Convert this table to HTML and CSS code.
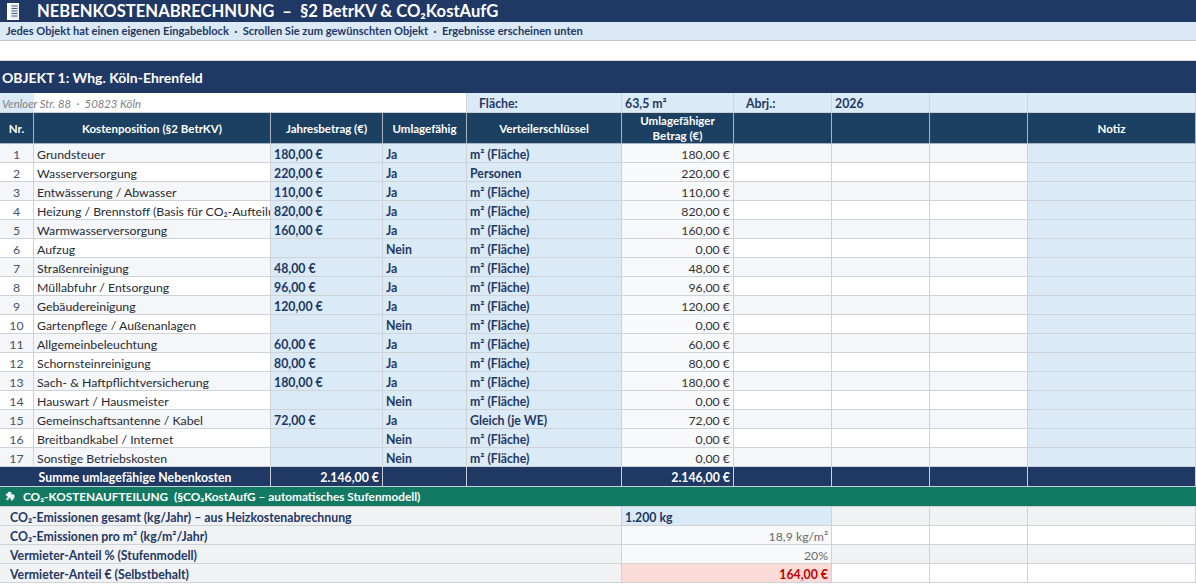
FILE: index.html
```html
<!DOCTYPE html>
<html lang="de">
<head>
<meta charset="utf-8">
<title>Nebenkostenabrechnung</title>
<link rel="stylesheet" href="styles.css">
</head>
<body>
<div class="sheet">
  <header class="title">
    <svg class="doc-icon" width="14" height="17" viewBox="0 0 14 17">
      <rect x="1.5" y="0.5" width="11" height="16" fill="#e6edf6" stroke="#ffffff"/>
      <rect x="1.5" y="0.5" width="3" height="16" fill="#ffffff"/>
      <path d="M5.5 3h6M5.5 5.5h6M5.5 8h6M5.5 10.5h6M5.5 13h6" stroke="#4d6282" stroke-width="1"/>
    </svg>
    <span class="title-text">NEBENKOSTENABRECHNUNG  –  §2 BetrKV &amp; CO₂KostAufG</span>
  </header>
  <div class="sub">Jedes Objekt hat einen eigenen Eingabeblock  ·  Scrollen Sie zum gewünschten Objekt  ·  Ergebnisse erscheinen unten</div>
  <div class="spacer"></div>

  <div class="obj">OBJEKT 1: Whg. Köln-Ehrenfeld</div>

  <div class="row addr">
    <div class="c addr-text">Venloer Str. 88  ·  50823 Köln</div>
    <div class="c in lbl">Fläche:</div>
    <div class="c in">63,5 m²</div>
    <div class="c in lbl">Abrj.:</div>
    <div class="c in">2026</div>
    <div class="c in"></div>
    <div class="c in"></div>
  </div>

  <div class="row hdr">
    <div class="c">Nr.</div>
    <div class="c">Kostenposition (§2 BetrKV)</div>
    <div class="c">Jahresbetrag (€)</div>
    <div class="c">Umlagefähig</div>
    <div class="c">Verteilerschlüssel</div>
    <div class="c">Umlagefähiger<br>Betrag (€)</div>
    <div class="c"></div>
    <div class="c"></div>
    <div class="c"></div>
    <div class="c">Notiz</div>
  </div>

  <div class="row data odd">
    <div class="c nr alt">1</div><div class="c alt">Grundsteuer</div><div class="c in">180,00 €</div><div class="c in">Ja</div><div class="c in">m² (Fläche)</div><div class="c calc">180,00 €</div><div class="c alt"></div><div class="c alt"></div><div class="c alt"></div><div class="c note"></div>
  </div>
  <div class="row data">
    <div class="c nr alt">2</div><div class="c alt">Wasserversorgung</div><div class="c in">220,00 €</div><div class="c in">Ja</div><div class="c in">Personen</div><div class="c calc">220,00 €</div><div class="c alt"></div><div class="c alt"></div><div class="c alt"></div><div class="c note"></div>
  </div>
  <div class="row data odd">
    <div class="c nr alt">3</div><div class="c alt">Entwässerung / Abwasser</div><div class="c in">110,00 €</div><div class="c in">Ja</div><div class="c in">m² (Fläche)</div><div class="c calc">110,00 €</div><div class="c alt"></div><div class="c alt"></div><div class="c alt"></div><div class="c note"></div>
  </div>
  <div class="row data">
    <div class="c nr alt">4</div><div class="c alt">Heizung / Brennstoff (Basis für CO₂-Aufteilung)</div><div class="c in">820,00 €</div><div class="c in">Ja</div><div class="c in">m² (Fläche)</div><div class="c calc">820,00 €</div><div class="c alt"></div><div class="c alt"></div><div class="c alt"></div><div class="c note"></div>
  </div>
  <div class="row data odd">
    <div class="c nr alt">5</div><div class="c alt">Warmwasserversorgung</div><div class="c in">160,00 €</div><div class="c in">Ja</div><div class="c in">m² (Fläche)</div><div class="c calc">160,00 €</div><div class="c alt"></div><div class="c alt"></div><div class="c alt"></div><div class="c note"></div>
  </div>
  <div class="row data">
    <div class="c nr alt">6</div><div class="c alt">Aufzug</div><div class="c in"></div><div class="c in">Nein</div><div class="c in">m² (Fläche)</div><div class="c calc">0,00 €</div><div class="c alt"></div><div class="c alt"></div><div class="c alt"></div><div class="c note"></div>
  </div>
  <div class="row data odd">
    <div class="c nr alt">7</div><div class="c alt">Straßenreinigung</div><div class="c in">48,00 €</div><div class="c in">Ja</div><div class="c in">m² (Fläche)</div><div class="c calc">48,00 €</div><div class="c alt"></div><div class="c alt"></div><div class="c alt"></div><div class="c note"></div>
  </div>
  <div class="row data">
    <div class="c nr alt">8</div><div class="c alt">Müllabfuhr / Entsorgung</div><div class="c in">96,00 €</div><div class="c in">Ja</div><div class="c in">m² (Fläche)</div><div class="c calc">96,00 €</div><div class="c alt"></div><div class="c alt"></div><div class="c alt"></div><div class="c note"></div>
  </div>
  <div class="row data odd">
    <div class="c nr alt">9</div><div class="c alt">Gebäudereinigung</div><div class="c in">120,00 €</div><div class="c in">Ja</div><div class="c in">m² (Fläche)</div><div class="c calc">120,00 €</div><div class="c alt"></div><div class="c alt"></div><div class="c alt"></div><div class="c note"></div>
  </div>
  <div class="row data">
    <div class="c nr alt">10</div><div class="c alt">Gartenpflege / Außenanlagen</div><div class="c in"></div><div class="c in">Nein</div><div class="c in">m² (Fläche)</div><div class="c calc">0,00 €</div><div class="c alt"></div><div class="c alt"></div><div class="c alt"></div><div class="c note"></div>
  </div>
  <div class="row data odd">
    <div class="c nr alt">11</div><div class="c alt">Allgemeinbeleuchtung</div><div class="c in">60,00 €</div><div class="c in">Ja</div><div class="c in">m² (Fläche)</div><div class="c calc">60,00 €</div><div class="c alt"></div><div class="c alt"></div><div class="c alt"></div><div class="c note"></div>
  </div>
  <div class="row data">
    <div class="c nr alt">12</div><div class="c alt">Schornsteinreinigung</div><div class="c in">80,00 €</div><div class="c in">Ja</div><div class="c in">m² (Fläche)</div><div class="c calc">80,00 €</div><div class="c alt"></div><div class="c alt"></div><div class="c alt"></div><div class="c note"></div>
  </div>
  <div class="row data odd">
    <div class="c nr alt">13</div><div class="c alt">Sach- &amp; Haftpflichtversicherung</div><div class="c in">180,00 €</div><div class="c in">Ja</div><div class="c in">m² (Fläche)</div><div class="c calc">180,00 €</div><div class="c alt"></div><div class="c alt"></div><div class="c alt"></div><div class="c note"></div>
  </div>
  <div class="row data">
    <div class="c nr alt">14</div><div class="c alt">Hauswart / Hausmeister</div><div class="c in"></div><div class="c in">Nein</div><div class="c in">m² (Fläche)</div><div class="c calc">0,00 €</div><div class="c alt"></div><div class="c alt"></div><div class="c alt"></div><div class="c note"></div>
  </div>
  <div class="row data odd">
    <div class="c nr alt">15</div><div class="c alt">Gemeinschaftsantenne / Kabel</div><div class="c in">72,00 €</div><div class="c in">Ja</div><div class="c in">Gleich (je WE)</div><div class="c calc">72,00 €</div><div class="c alt"></div><div class="c alt"></div><div class="c alt"></div><div class="c note"></div>
  </div>
  <div class="row data">
    <div class="c nr alt">16</div><div class="c alt">Breitbandkabel / Internet</div><div class="c in"></div><div class="c in">Nein</div><div class="c in">m² (Fläche)</div><div class="c calc">0,00 €</div><div class="c alt"></div><div class="c alt"></div><div class="c alt"></div><div class="c note"></div>
  </div>
  <div class="row data odd">
    <div class="c nr alt">17</div><div class="c alt">Sonstige Betriebskosten</div><div class="c in"></div><div class="c in">Nein</div><div class="c in">m² (Fläche)</div><div class="c calc">0,00 €</div><div class="c alt"></div><div class="c alt"></div><div class="c alt"></div><div class="c note"></div>
  </div>

  <div class="row sum">
    <div class="c sum-label">Summe umlagefähige Nebenkosten</div>
    <div class="c num">2.146,00 €</div>
    <div class="c"></div>
    <div class="c"></div>
    <div class="c num">2.146,00 €</div>
    <div class="c"></div>
    <div class="c"></div>
    <div class="c"></div>
    <div class="c"></div>
  </div>

  <div class="co2-head">
    <svg class="globe-icon" width="11" height="11" viewBox="0 0 11 11">
      <path d="M3 1.2c1.2-0.6 2.6-0.5 3.4 0.2 0.3 0.8-0.6 1.2 0.1 1.9 0.9 0.3 1.8-0.4 2.6 0.4 0.6 1 0.6 2.3 0.1 3.4-0.6 1.3-1.6 2.3-2.9 2.7-0.7-0.6-0.2-1.6-0.9-2.3-0.9-0.4-2 0.1-2.7-0.7-0.4-0.7-0.1-1.5-0.7-2.1-0.7-0.2-1.2 0.2-1.3-0.4 0.3-1.2 1.2-2.2 2.3-2.4z" fill="#eef3f1"/>
      <circle cx="2.5" cy="8" r="1.3" fill="#d4e2dc"/>
    </svg>
    <span>CO₂-KOSTENAUFTEILUNG  (§CO₂KostAufG – automatisches Stufenmodell)</span>
  </div>

  <div class="row co2 shade">
    <div class="c co2-label">CO₂-Emissionen gesamt (kg/Jahr) – aus Heizkostenabrechnung</div>
    <div class="c co2-val in">1.200 kg</div>
    <div class="c tail"></div><div class="c tail"></div><div class="c tail"></div>
  </div>
  <div class="row co2">
    <div class="c co2-label">CO₂-Emissionen pro m² (kg/m²/Jahr)</div>
    <div class="c co2-val calc muted">18,9 kg/m²</div>
    <div class="c tail"></div><div class="c tail"></div><div class="c tail"></div>
  </div>
  <div class="row co2 shade">
    <div class="c co2-label">Vermieter-Anteil % (Stufenmodell)</div>
    <div class="c co2-val calc muted">20%</div>
    <div class="c tail"></div><div class="c tail"></div><div class="c tail"></div>
  </div>
  <div class="row co2">
    <div class="c co2-label">Vermieter-Anteil € (Selbstbehalt)</div>
    <div class="c co2-val result">164,00 €</div>
    <div class="c tail"></div><div class="c tail"></div><div class="c tail"></div>
  </div>
</div>
</body>
</html>
```

FILE: styles.css
```css
* { box-sizing: border-box; }

body {
  margin: 0;
  background: #ffffff;
  font-family: Lato, "Noto Sans", "Liberation Sans", sans-serif;
  color: #262b33;
}

.sheet {
  width: 1196px;
}

/* ---------- title ---------- */
.title {
  height: 22px;
  background: #203864;
  display: flex;
  align-items: center;
  padding-left: 6px;
  gap: 17px;
}
.doc-icon { flex: none; }
.title-text {
  color: #ffffff;
  font-weight: 700;
  font-size: 16.6px;
  white-space: pre;
  line-height: 22px;
}

.sub {
  height: 19px;
  background: #dbe9f6;
  border-bottom: 1px solid #bfc8d2;
  color: #1f3864;
  font-weight: 700;
  font-size: 11.1px;
  line-height: 18px;
  padding-left: 6px;
  white-space: pre;
}

.spacer {
  height: 20px;
  border-bottom: 1px solid #d4d7db;
}

.obj {
  height: 32px;
  background: #203864;
  color: #ffffff;
  font-weight: 700;
  font-size: 14px;
  display: flex;
  align-items: center;
  padding-left: 2px;
}

/* ---------- grid rows ---------- */
.row {
  display: grid;
  grid-template-columns: 34px 237px 112px 84px 155px 112px 98px 98px 98px 168px;
}

.c {
  height: 19px;
  border-right: 1px solid #cfd3d8;
  border-bottom: 1px solid #cfd3d8;
  padding: 2px 3px 0;
  font-size: 12.3px;
  line-height: 17px;
  white-space: nowrap;
  overflow: hidden;
  text-overflow: clip;
  background: #ffffff;
}

.row.odd .alt { background: #f4f6f9; }

.nr {
  text-align: center;
  color: #44546a;
}

.in {
  background: #dbeaf7;
  color: #1f3864;
  font-weight: 700;
}

.calc {
  background: #f7f9fb;
  text-align: right;
  color: #333333;
}

.note { background: #dbeaf7; }

/* address row */
.addr .c { height: 20px; line-height: 18px; }
.addr-text {
  grid-column: 1 / 5;
  background: linear-gradient(to right, #dbeaf7 34px, #ffffff 34px);
  font-style: italic;
  color: #808080;
  font-size: 11.3px;
  padding-left: 2px;
  white-space: pre;
}
.addr .lbl { padding-left: 12px; }

/* header row */
.hdr .c {
  height: 31px;
  padding: 0 3px;
  background: #1b4061;
  color: #ffffff;
  font-weight: 700;
  font-size: 11.5px;
  line-height: 15px;
  display: flex;
  align-items: center;
  justify-content: center;
  text-align: center;
  border-right-color: #a7b4c2;
  border-bottom-color: #a7b4c2;
}

/* sum row */
.sum .c {
  height: 20px;
  line-height: 18px;
  background: #203864;
  color: #ffffff;
  font-weight: 700;
  border-right-color: #c9d0da;
  border-bottom-color: #c9d0da;
}
.sum .sum-label {
  grid-column: 1 / 3;
  text-align: center;
}
.sum .num { text-align: right; }

/* CO2 section */
.co2-head {
  height: 20px;
  background: #127a62;
  color: #ffffff;
  display: flex;
  align-items: center;
  padding-left: 5px;
  gap: 7px;
  font-size: 11.8px;
  font-weight: 700;
  white-space: pre;
  border-bottom: 1px solid #cfd3d8;
}
.globe-icon { flex: none; }

.co2 .co2-label {
  grid-column: 1 / 6;
  background: #f1f2f4;
  color: #1f3864;
  font-weight: 700;
  padding-left: 10px;
}
.co2 .co2-val {
  grid-column: 6 / 8;
}
.co2.shade .tail { background: #f1f2f4; }

.muted { color: #6b6b6b; }

.result {
  background: #fadbd8;
  color: #c00000;
  font-weight: 700;
  text-align: right;
}
```
